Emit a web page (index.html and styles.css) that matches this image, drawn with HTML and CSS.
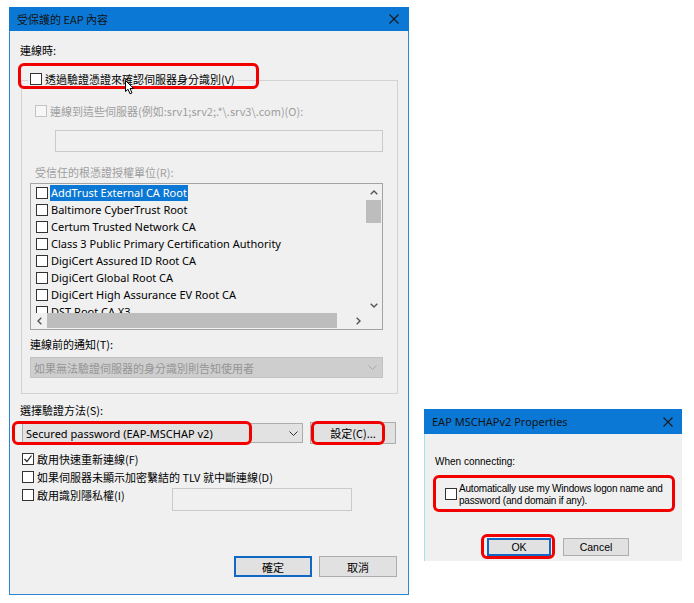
FILE: index.html
```html
<!DOCTYPE html>
<html lang="zh-Hant">
<head>
<meta charset="utf-8">
<title>EAP</title>
<link rel="stylesheet" href="styles.css">
</head>
<body>
<div class="win win-peap">
  <div class="titlebar">
    <span class="title">受保護的 EAP 內容</span>
    <svg class="close" width="10" height="10" viewBox="0 0 10 10"><path d="M0.5 0.5L9.5 9.5M9.5 0.5L0.5 9.5" stroke="#1a1a1a" stroke-width="1.1" fill="none"/></svg>
  </div>
  <div class="body">
    <div class="label first-label">連線時:</div>
    <div class="group">
      <div class="legend"><span class="cb"></span><span>透過驗證憑證來確認伺服器身分識別(V)</span></div>
      <div class="row row-servers dis"><span class="cb cb-dis"></span><span>連線到這些伺服器(例如:srv1;srv2;.*\.srv3\.com)(O):</span></div>
      <div class="input servers"></div>
      <div class="label dis label-roots">受信任的根憑證授權單位(R):</div>
      <div class="listbox">
        <div class="items">
          <div class="item"><span class="cb"></span><span class="txt sel">AddTrust External CA Root</span></div>
          <div class="item"><span class="cb"></span><span class="txt">Baltimore CyberTrust Root</span></div>
          <div class="item"><span class="cb"></span><span class="txt">Certum Trusted Network CA</span></div>
          <div class="item"><span class="cb"></span><span class="txt">Class 3 Public Primary Certification Authority</span></div>
          <div class="item"><span class="cb"></span><span class="txt">DigiCert Assured ID Root CA</span></div>
          <div class="item"><span class="cb"></span><span class="txt">DigiCert Global Root CA</span></div>
          <div class="item"><span class="cb"></span><span class="txt">DigiCert High Assurance EV Root CA</span></div>
          <div class="item"><span class="cb"></span><span class="txt">DST Root CA X3</span></div>
        </div>
        <div class="vscroll">
          <div class="sbtn"><svg width="8" height="5" viewBox="0 0 8 5"><polyline points="0.7,4.3 4,1 7.3,4.3" fill="none" stroke="#555" stroke-width="1.4"/></svg></div>
          <div class="vthumb"></div>
          <div class="vtrack"></div>
          <div class="sbtn"><svg width="8" height="5" viewBox="0 0 8 5"><polyline points="0.7,0.7 4,4 7.3,0.7" fill="none" stroke="#555" stroke-width="1.4"/></svg></div>
        </div>
        <div class="hscroll">
          <div class="sbtn"><svg width="5" height="8" viewBox="0 0 5 8"><polyline points="4.3,0.7 1,4 4.3,7.3" fill="none" stroke="#555" stroke-width="1.4"/></svg></div>
          <div class="hthumb"></div>
          <div class="htrack"></div>
          <div class="sbtn"><svg width="5" height="8" viewBox="0 0 5 8"><polyline points="0.7,0.7 4,4 0.7,7.3" fill="none" stroke="#555" stroke-width="1.4"/></svg></div>
        </div>
        <div class="corner"></div>
      </div>
      <div class="label label-notify">連線前的通知(T):</div>
      <div class="combo combo-dis">
        <span>如果無法驗證伺服器的身分識別則告知使用者</span>
        <svg width="9" height="5" viewBox="0 0 9 5"><polyline points="0.5,0.5 4.5,4.5 8.5,0.5" fill="none" stroke="#a8a8a8"/></svg>
      </div>
    </div>
    <div class="label label-method">選擇驗證方法(S):</div>
    <div class="method-row">
      <div class="combo combo-method">
        <span class="latin">Secured password (EAP-MSCHAP v2)</span>
        <svg width="9" height="5" viewBox="0 0 9 5"><polyline points="0.5,0.5 4.5,4.5 8.5,0.5" fill="none" stroke="#333"/></svg>
      </div>
      <div class="btn btn-config">設定(C)...</div>
    </div>
    <div class="row opt opt-first"><span class="cb cb-checked"><svg width="10" height="10" viewBox="0 0 10 10"><polyline points="1.5,5 4,7.5 8.5,1.5" fill="none" stroke="#222" stroke-width="1.2"/></svg></span><span>啟用快速重新連線(F)</span></div>
    <div class="row opt"><span class="cb"></span><span>如果伺服器未顯示加密繫結的 TLV 就中斷連線(D)</span></div>
    <div class="row opt opt-privacy">
      <div class="privacy-label"><span class="cb"></span><span>啟用識別隱私權(I)</span></div>
      <div class="input identity"></div>
    </div>
    <div class="dlg-buttons">
      <div class="btn btn-default">確定</div>
      <div class="btn">取消</div>
    </div>
  </div>
</div>

<div class="win win-mschap">
  <div class="titlebar">
    <span class="title latin">EAP MSCHAPv2 Properties</span>
    <svg class="close" width="10" height="10" viewBox="0 0 10 10"><path d="M0.5 0.5L9.5 9.5M9.5 0.5L0.5 9.5" stroke="#1a1a1a" stroke-width="1.1" fill="none"/></svg>
  </div>
  <div class="body">
    <div class="ms-label">When connecting:</div>
    <div class="ms-check"><span class="cb"></span><span class="ms-text">Automatically use my Windows logon name and<br>password (and domain if any).</span></div>
    <div class="ms-buttons">
      <div class="btn ms-btn btn-default">OK</div>
      <div class="btn ms-btn ms-cancel">Cancel</div>
    </div>
  </div>
</div>

<div class="mark mark-verify"></div>
<div class="mark mark-method"></div>
<div class="mark mark-config"></div>
<div class="mark mark-auto"></div>
<div class="mark mark-ok"></div>

<svg class="cursor" width="10" height="15" viewBox="0 0 10 15"><path d="M0.5 0.5L0.5 11.5L3 9.2L5 13.8L7 12.9L5.1 8.5L8.6 8.5Z" fill="#fff" stroke="#000" stroke-width="1"/></svg>
</body>
</html>
```

FILE: styles.css
```css
* { box-sizing: border-box; }

body {
  margin: 0;
  width: 694px;
  height: 603px;
  background: #ffffff;
  position: relative;
  overflow: hidden;
  font-family: "Noto Sans CJK TC", "Noto Sans", sans-serif;
  font-size: 11px;
  color: #000;
}

.latin { font-family: "Noto Sans", "Noto Sans CJK TC", sans-serif; }

.win {
  position: absolute;
  display: flex;
  flex-direction: column;
  background: #f0f0f0;
}

.titlebar {
  display: flex;
  align-items: center;
  justify-content: space-between;
  background: #0a78d4;
  color: #141414;
  padding: 0 10px 0 8px;
  flex: none;
}

.title { font-size: 11px; white-space: nowrap; }

.body { flex: 1; display: flex; flex-direction: column; }

/* ---------- PEAP dialog ---------- */
.win-peap { left: 9px; top: 7px; width: 400px; height: 588px; }
.win-peap .titlebar { height: 24px; }
.win-peap .body {
  border: 1px solid #2b86d4;
  border-top: 0;
  padding: 0 10px 17px 10px;
}

.label { height: 16px; line-height: 16px; white-space: nowrap; }
.first-label { margin-top: 11px; }
.dis { color: #9e9e9e; }

.cb {
  flex: none;
  display: inline-flex;
  align-items: center;
  justify-content: center;
  width: 12px;
  height: 12px;
  border: 1px solid #333;
  background: #fff;
}
.cb-dis { border-color: #c4c4c4; background: #f7f7f7; }

.row { display: flex; align-items: center; gap: 3px; height: 16px; line-height: 16px; white-space: nowrap; }

.group {
  margin: 22px 0 0 1px;
  width: 377px;
  border: 1px solid #d3d3d3;
  padding: 0 14px 15px 8px;
}
.legend {
  display: flex;
  align-items: center;
  gap: 3px;
  width: max-content;
  height: 16px;
  line-height: 16px;
  margin: -10px 0 0 -2px;
  padding: 0 2px;
  background: #f0f0f0;
  white-space: nowrap;
}
.row-servers { margin: 16px 0 0 5px; gap: 3px; }

.input { background: #f0f0f0; border: 1px solid #cacaca; }
.servers { margin: 11px 0 0 25px; width: 328px; height: 22px; }
.label-roots { margin: 12px 0 0 5px; }

.listbox {
  margin-top: 3px;
  width: 353px;
  height: 147px;
  border: 1px solid #a3a3a3;
  display: grid;
  grid-template-columns: 1fr 16px;
  grid-template-rows: 1fr 16px;
  background: #f0f0f0;
}
.items { overflow: hidden; }
.item {
  display: flex;
  align-items: center;
  height: 17px;
  padding-left: 5px;
  gap: 2px;
  white-space: nowrap;
  font-family: "Noto Sans", sans-serif;
  font-size: 11px;
}
.txt { padding: 0 1px; line-height: 16px; }
.sel { background: #0a78d4; color: #fff; }

.vscroll { display: flex; flex-direction: column; }
.sbtn { flex: none; width: 16px; height: 16px; display: flex; align-items: center; justify-content: center; }
.vthumb { flex: none; height: 23px; margin: 0 1px 0 0; background: #bdbdbd; }
.vtrack { flex: 1; }
.hscroll { display: flex; }
.hthumb { flex: none; width: 290px; background: #bdbdbd; margin-bottom: 1px; }
.htrack { flex: 1; }
.corner { background: #f0f0f0; }

.label-notify { margin-top: 6px; }
.combo {
  display: flex;
  align-items: center;
  justify-content: space-between;
  white-space: nowrap;
}
.combo-dis {
  margin-top: 5px;
  width: 353px;
  height: 21px;
  background: #cecece;
  border: 1px solid #c2c2c2;
  color: #959595;
  padding: 0 5px 0 3px;
}

.label-method { margin-top: 8px; }
.method-row { display: flex; align-items: center; gap: 7px; height: 22px; margin-top: 4px; }
.combo-method {
  margin-left: 2px;
  width: 281px;
  height: 20px;
  background: #e2e2e2;
  border: 1px solid #adadad;
  padding: 0 4px 0 3px;
  font-size: 11px;
}

.btn {
  display: flex;
  align-items: center;
  justify-content: center;
  background: #e1e1e1;
  border: 1px solid #adadad;
  white-space: nowrap;
}
.btn-config { width: 86px; height: 22px; }

.opt { margin-top: 2px; padding-left: 2px; }
.opt-first { margin-top: 7px; }
.opt-privacy { align-items: flex-start; height: auto; }
.privacy-label { display: flex; align-items: center; gap: 3px; width: 147px; height: 16px; }
.identity { margin-top: 1px; width: 180px; height: 23px; }

.dlg-buttons {
  margin-top: auto;
  display: flex;
  justify-content: flex-end;
  gap: 7px;
  padding-right: 1px;
}
.dlg-buttons .btn { width: 78px; height: 21px; }
.btn-default { border: 2px solid #1167c4; }

/* ---------- MSCHAP dialog ---------- */
.win-mschap {
  left: 424px;
  top: 409px;
  width: 258px;
  height: 152px;
  font-family: "Liberation Sans", Arial, sans-serif;
  font-size: 10px;
}
.win-mschap .titlebar { height: 25px; padding-right: 9px; }
.win-mschap .title { font-size: 11px; }
.win-mschap .body { border-left: 1px solid #a3e0f2; padding: 21px 0 0 10px; }
.ms-label { line-height: 13px; height: 13px; }
.ms-check { display: flex; align-items: flex-start; margin: 15px 0 0 10px; }
.ms-check .cb { margin-top: 5px; border-color: #333; }
.ms-text { margin-left: 2px; line-height: 12px; white-space: nowrap; letter-spacing: -0.2px; }
.ms-buttons { display: flex; gap: 12px; margin: 31px 0 0 52px; font-size: 10.5px; }
.ms-btn { width: 64px; height: 18px; }
.ms-cancel { width: 66px; }

/* ---------- annotations ---------- */
.mark {
  position: absolute;
  border: 3px solid #f20000;
  border-radius: 6px;
}
.mark-verify { left: 18px; top: 63px; width: 241px; height: 26px; }
.mark-method { left: 12px; top: 421px; width: 240px; height: 24px; }
.mark-config { left: 311px; top: 421px; width: 74px; height: 24px; }
.mark-auto { left: 433px; top: 475px; width: 242px; height: 37px; }
.mark-ok { left: 481px; top: 534px; width: 74px; height: 25px; }

.cursor { position: absolute; left: 125px; top: 80px; }
```
